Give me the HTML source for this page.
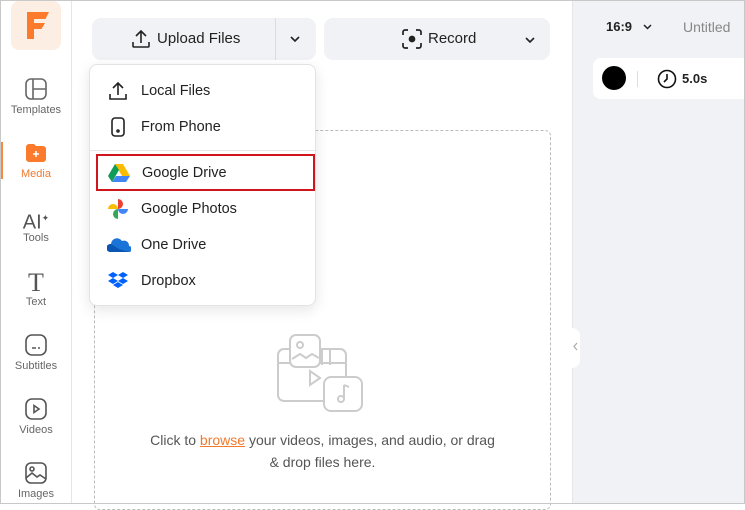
<!DOCTYPE html>
<html><head><meta charset="utf-8"><style>
*{box-sizing:border-box;margin:0;padding:0}
body{width:745px;height:504px;overflow:hidden;font-family:"Liberation Sans",sans-serif;background:#fff;position:relative;color:#222}
.frame{position:absolute;inset:0;border:1px solid #c8c8c8;pointer-events:none;z-index:10}
.side{position:absolute;left:0;top:0;width:72px;height:504px;border-right:1px solid #e6e6e8;background:#fff}
.logo{position:absolute;left:11px;top:1px;width:50px;height:49px;background:#fdeee3;border-radius:8px}
.nav{position:absolute;left:0;width:72px;text-align:center;font-size:11px;color:#666}
.nav svg{display:block;margin:0 auto 3px}
.right{position:absolute;left:572px;top:0;width:173px;height:504px;background:#f1f2f5}
.btn{position:absolute;background:#f1f2f5;border-radius:9px;height:42px;top:18px;font-size:15px;color:#222}
.menu{position:absolute;left:89px;top:64px;width:227px;height:242px;background:#fff;border:1px solid #e3e3e6;border-radius:8px;box-shadow:0 4px 14px rgba(0,0,0,.1);z-index:5}
.it{position:absolute;left:0;width:225px;height:36px;font-size:14.5px;color:#222}
.it span{position:absolute;left:51px;top:10px}
.it svg{position:absolute;left:17px;top:7px}
.drop{position:absolute;left:94px;top:130px;width:457px;height:380px;border:1px dashed #bbb;border-radius:6px}
.chev{position:absolute}
</style></head><body>
<div class="side">
 <div class="logo"><svg width="50" height="49" viewBox="0 0 50 49"><path d="M16 11h22l-3.5 7H23v4h11l-3.5 6H23v10h-7z" fill="#fb7a2b"/></svg></div>
 <div style="position:absolute;left:0;top:142px;width:3px;height:37px;background:#f28a42"></div>
 <div class="nav" style="top:77px"><svg width="24" height="24" viewBox="0 0 24 24" fill="none" stroke="#666" stroke-width="1.6"><rect x="2" y="2" width="20" height="20" rx="5"/><path d="M9 2v20M9 12h13"/></svg>Templates</div>
 <div class="nav" style="top:141px;color:#f07a2e"><svg width="24" height="24" viewBox="0 0 24 24"><path d="M2 6a3 3 0 0 1 3-3h5l2 2h7a3 3 0 0 1 3 3v10a3 3 0 0 1-3 3H5a3 3 0 0 1-3-3z" fill="#fb7a2b"/><path d="M12 10v6M9 13h6" stroke="#fff" stroke-width="1.6"/></svg>Media</div>
 <div class="nav" style="top:205px"><div style="font-size:20px;color:#555;height:27px;line-height:27px">AI<sup style="font-size:9px">✦</sup></div>Tools</div>
 <div class="nav" style="top:269px"><div style="font-family:'Liberation Serif',serif;font-size:26px;color:#555;height:27px;line-height:27px">T</div>Text</div>
 <div class="nav" style="top:333px"><svg width="24" height="24" viewBox="0 0 24 24" fill="none" stroke="#555" stroke-width="1.6"><rect x="2" y="2" width="20" height="20" rx="6"/><path d="M8 15h4M14 15h2"/></svg>Subtitles</div>
 <div class="nav" style="top:397px"><svg width="24" height="24" viewBox="0 0 24 24" fill="none" stroke="#555" stroke-width="1.6"><rect x="2" y="2" width="20" height="20" rx="6"/><path d="M10 8.5v7l5-3.5z"/></svg>Videos</div>
 <div class="nav" style="top:461px"><svg width="24" height="24" viewBox="0 0 24 24" fill="none" stroke="#555" stroke-width="1.6"><rect x="2" y="2" width="20" height="20" rx="5"/><circle cx="8" cy="8" r="2"/><path d="M2 17l6-5 5 4 3-2 6 4"/></svg>Images</div>
</div>
<div class="btn" style="left:92px;width:224px">
 <svg style="position:absolute;left:39px;top:11px" width="20" height="20" viewBox="0 0 20 20" fill="none" stroke="#222" stroke-width="1.6"><path d="M10 14V2M5 7l5-5 5 5M2 13v4a1 1 0 0 0 1 1h14a1 1 0 0 0 1-1v-4"/></svg>
 <span style="position:absolute;left:65px;top:12px">Upload Files</span>
 <div style="position:absolute;left:183px;top:0;width:1px;height:42px;background:#dcdce0"></div>
 <svg class="chev" style="left:198px;top:18px" width="10" height="6" viewBox="0 0 10 6" fill="none" stroke="#222" stroke-width="1.6"><path d="M1 1l4 4 4-4"/></svg>
</div>
<div class="btn" style="left:324px;width:226px">
 <svg style="position:absolute;left:77px;top:10px" width="22" height="22" viewBox="0 0 22 22" fill="none" stroke="#222" stroke-width="1.7"><path d="M2 7V4a2 2 0 0 1 2-2h3M15 2h3a2 2 0 0 1 2 2v3M20 15v3a2 2 0 0 1-2 2h-3M7 20H4a2 2 0 0 1-2-2v-3"/><circle cx="11" cy="11" r="2.5" fill="#222"/></svg>
 <span style="position:absolute;left:104px;top:12px">Record</span>
 <svg class="chev" style="left:201px;top:19px" width="10" height="6" viewBox="0 0 10 6" fill="none" stroke="#222" stroke-width="1.6"><path d="M1 1l4 4 4-4"/></svg>
</div>
<div class="drop"></div>
<svg style="position:absolute;left:276px;top:333px" width="90" height="80" viewBox="0 0 90 80" fill="none" stroke="#ccc" stroke-width="2"><rect x="2" y="16" width="68" height="52" rx="6"/><rect x="14" y="2" width="30" height="32" rx="6" fill="#fff"/><circle cx="24" cy="12" r="3"/><path d="M16 26l8-5 6 4 6-4 7 4"/><path d="M46 16v16M54 16v16M2 30h12M44 30h26"/><path d="M34 38v14l10-7z"/><rect x="48" y="44" width="38" height="34" rx="7" fill="#fff"/><path d="M68 52v14M68 52l5 2"/><circle cx="65" cy="66" r="3"/></svg>
<div style="position:absolute;left:94px;top:429px;width:457px;text-align:center;font-size:14px;line-height:22px;color:#555">Click to <span style="color:#f07a2e;text-decoration:underline">browse</span> your videos, images, and audio, or drag<br>&amp; drop files here.</div>
<div class="menu">
 <div class="it" style="top:8px"><svg width="22" height="22" viewBox="0 0 22 22" fill="none" stroke="#222" stroke-width="1.6"><path d="M11 15V3M6 8l5-5 5 5M3 14v5h16v-5"/></svg><span>Local Files</span></div>
 <div class="it" style="top:44px"><svg width="22" height="22" viewBox="0 0 22 22" fill="none" stroke="#222" stroke-width="1.6"><rect x="5" y="2" width="12" height="18" rx="3"/><circle cx="11" cy="15" r="1"/></svg><span>From Phone</span></div>
 <div style="position:absolute;left:0;top:85px;width:225px;height:1px;background:#e8e8e8"></div>
 <div class="it" style="top:89px;left:6px;width:219px;height:37px;border:2px solid #d0161c"><svg style="left:10px" width="22" height="20" viewBox="0 0 22 20"><path d="M7 1h8l7 12h-8z" fill="#fbbc04"/><path d="M7 1l-7 12 4 6 7-12z" fill="#0f9d58"/><path d="M4 19h14l4-6H8z" fill="#4285f4"/></svg><span style="left:44px;top:9px">Google Drive</span></div>
 <div class="it" style="top:126px"><svg width="22" height="22" viewBox="0 0 22 22"><path d="M11 1a5 5 0 0 1 0 10z" fill="#ea4335"/><path d="M21 11a5 5 0 0 1-10 0z" fill="#4285f4"/><path d="M11 21a5 5 0 0 1 0-10z" fill="#34a853"/><path d="M1 11a5 5 0 0 1 10 0z" fill="#fbbc04"/></svg><span>Google Photos</span></div>
 <div class="it" style="top:162px"><svg width="24" height="22" viewBox="0 0 24 22"><path d="M3 18a4 4 0 0 1 1-8 6 6 0 0 1 11-3 5 5 0 0 1 7 5 3 3 0 0 1 0 6z" fill="#1a73d6"/><path d="M3 18a4 4 0 0 1 1-8l8 5 10 3z" fill="#0a56b5"/></svg><span>One Drive</span></div>
 <div class="it" style="top:198px"><svg width="22" height="22" viewBox="0 0 22 22" fill="#0061fe"><path d="M6 2l5 3-5 3-5-3zM16 2l5 3-5 3-5-3zM1 11l5-3 5 3-5 3zM11 11l5-3 5 3-5 3zM6 15l5-3 5 3-5 3z"/></svg><span>Dropbox</span></div>
</div>
<div class="right">
 <div style="position:absolute;left:0;top:0;width:1px;height:504px;background:#e6e6e8"></div>
 <div style="position:absolute;left:-4px;top:328px;width:12px;height:40px;background:#fff;border-radius:0 8px 8px 0"></div>
 <svg style="position:absolute;left:1px;top:342px" width="5" height="9" viewBox="0 0 5 9" fill="none" stroke="#aaa" stroke-width="1.2"><path d="M4 1L1 4.5 4 8"/></svg>
 <span style="position:absolute;left:34px;top:19px;font-size:13px;font-weight:bold;color:#222">16:9</span>
 <svg style="position:absolute;left:71px;top:24px" width="9" height="6" viewBox="0 0 9 6" fill="none" stroke="#222" stroke-width="1.5"><path d="M1 1l3.5 3.5L8 1"/></svg>
 <span style="position:absolute;left:111px;top:19px;font-size:14px;color:#888">Untitled</span>
 <div style="position:absolute;left:21px;top:58px;width:160px;height:41px;background:#fff;border-radius:8px">
  <div style="position:absolute;left:9px;top:8px;width:24px;height:24px;border-radius:50%;background:#000"></div>
  <div style="position:absolute;left:44px;top:13px;width:1px;height:16px;background:#ddd"></div>
  <svg style="position:absolute;left:64px;top:11px" width="20" height="20" viewBox="0 0 20 20" fill="none" stroke="#111" stroke-width="1.6"><circle cx="10" cy="10" r="8.5"/><path d="M10 5v5l-3 3"/></svg>
  <span style="position:absolute;left:89px;top:13px;font-size:13px;font-weight:bold">5.0s</span>
 </div>
</div>
<div class="frame"></div>
</body></html>
